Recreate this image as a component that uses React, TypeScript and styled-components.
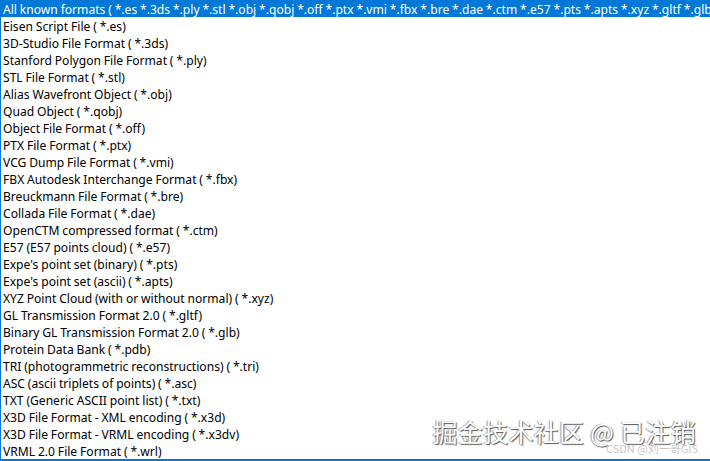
import React from "react";
import styled, { createGlobalStyle } from "styled-components";

const GlobalStyle = createGlobalStyle`
    html, body {
        margin: 0;
        padding: 0;
        background: #ffffff;
    }
`;

const FORMATS = [
    "All known formats ( *.es *.3ds *.ply *.stl *.obj *.qobj *.off *.ptx *.vmi *.fbx *.bre *.dae *.ctm *.e57 *.pts *.apts *.xyz *.gltf *.glb",
    "Eisen Script File ( *.es)",
    "3D-Studio File Format ( *.3ds)",
    "Stanford Polygon File Format ( *.ply)",
    "STL File Format ( *.stl)",
    "Alias Wavefront Object ( *.obj)",
    "Quad Object ( *.qobj)",
    "Object File Format ( *.off)",
    "PTX File Format ( *.ptx)",
    "VCG Dump File Format ( *.vmi)",
    "FBX Autodesk Interchange Format ( *.fbx)",
    "Breuckmann File Format ( *.bre)",
    "Collada File Format ( *.dae)",
    "OpenCTM compressed format ( *.ctm)",
    "E57 (E57 points cloud) ( *.e57)",
    "Expe's point set (binary) ( *.pts)",
    "Expe's point set (ascii) ( *.apts)",
    "XYZ Point Cloud (with or without normal) ( *.xyz)",
    "GL Transmission Format 2.0 ( *.gltf)",
    "Binary GL Transmission Format 2.0 ( *.glb)",
    "Protein Data Bank ( *.pdb)",
    "TRI (photogrammetric reconstructions) ( *.tri)",
    "ASC (ascii triplets of points) ( *.asc)",
    "TXT (Generic ASCII point list) ( *.txt)",
    "X3D File Format - XML encoding ( *.x3d)",
    "X3D File Format - VRML encoding ( *.x3dv)",
    "VRML 2.0 File Format ( *.wrl)",
];

const App = () => {
    return (
        <>
            <GlobalStyle />
            <Dropdown>
                {FORMATS.map((label, i) => (
                    <Option key={label} selected={i === 0}>
                        {label}
                    </Option>
                ))}
                <Watermark>
                    <Brand>掘金技术社区 @ 已注销</Brand>
                    <Credit>CSDN @刘一哥GIS</Credit>
                </Watermark>
            </Dropdown>
        </>
    );
};

export default App;

const Dropdown = styled.div`
    position: relative;
    width: 710px;
    height: 461px;
    box-sizing: border-box;
    border-left: 1px solid #0078d7;
    border-bottom: 2px solid #0078d7;
    background: #ffffff;
    overflow: hidden;
    display: flex;
    flex-direction: column;
`;

const Option = styled.div<{ selected: boolean }>`
    flex: none;
    height: 17px;
    line-height: 19px;
    overflow: hidden;
    padding-left: 2px;
    white-space: nowrap;
    font-family: "Noto Sans", "Noto Sans CJK SC", sans-serif;
    font-size: 12.1px;
    word-spacing: -0.3px;
    color: ${p => (p.selected ? "#ffffff" : "#000000")};
    background: ${p => (p.selected ? "#0078d7" : "transparent")};
`;

const Watermark = styled.div`
    position: absolute;
    right: 14px;
    bottom: 4px;
    display: flex;
    flex-direction: column;
    align-items: flex-end;
    pointer-events: none;
`;

const Brand = styled.div`
    font-family: "Noto Sans CJK SC", sans-serif;
    font-size: 25px;
    line-height: 28px;
    color: #ffffff;
    text-shadow: 1px 1px 1px #555555, -1px 0 1px #999999;
    letter-spacing: 0.3px;
`;

const Credit = styled.div`
    margin-top: -3px;
    margin-right: -2px;
    font-family: "Noto Sans CJK SC", sans-serif;
    font-size: 11px;
    line-height: 13px;
    color: #c8c8c8;
`;
